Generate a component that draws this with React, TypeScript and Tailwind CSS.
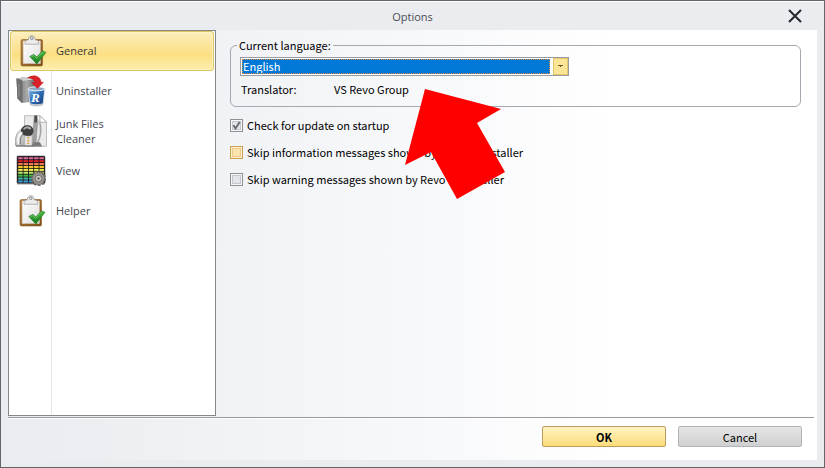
import { useState } from 'react';
import type { ReactNode } from 'react';

const uiFont = "font-['Noto_Sans_CJK_JP','Liberation_Sans',sans-serif]";

function ClipboardIcon() {
  return (
    <svg width="30" height="32" viewBox="0 0 30 32" aria-hidden="true">
      <defs>
        <linearGradient id="board" x1="0" y1="0" x2="1" y2="1">
          <stop offset="0" stopColor="#b98746" />
          <stop offset="1" stopColor="#7d4c17" />
        </linearGradient>
        <linearGradient id="sheet" x1="0" y1="0" x2="1" y2="1">
          <stop offset="0" stopColor="#ffffff" />
          <stop offset="1" stopColor="#dedede" />
        </linearGradient>
        <linearGradient id="tick" x1="0" y1="0" x2="0" y2="1">
          <stop offset="0" stopColor="#4fb944" />
          <stop offset="1" stopColor="#147a1b" />
        </linearGradient>
      </defs>
      <rect x="4" y="4.500" width="21.500" height="26.500" rx="1.500" fill="url(#board)" stroke="#8a5a22" strokeWidth=".6" />
      <path d="M6.200 6h17.200v22.500H6.200z" fill="url(#sheet)" stroke="#d9d2c4" strokeWidth=".5" />
      <path d="M8 9.200V6.800c0-1 1-1.500 3.200-1.900L12 2.200C12.800.2 16.800.2 17.600 2.200l.8 2.700c2.200.4 3.200.9 3.200 1.900v2.400z" fill="#ececec" stroke="#9a9a9a" strokeWidth=".7" />
      <circle cx="14.800" cy="3.200" r="1.300" fill="#fff" stroke="#666" strokeWidth=".8" />
      <path d="M12.800 21.500l4.200-2.200 2.600 2.800 6-6.300L29 17.500 19.800 29z" fill="url(#tick)" stroke="#1d7a22" strokeWidth=".6" />
      <path d="M14.400 21.700l2.400-1.200 2.700 3 6.200-6.500" fill="none" stroke="#86d97a" strokeWidth=".6" />
    </svg>
  );
}

function UninstallerIcon() {
  return (
    <svg width="30" height="32" viewBox="0 0 30 32" aria-hidden="true">
      <defs>
        <linearGradient id="box" x1="0" y1="0" x2="1" y2="0">
          <stop offset="0" stopColor="#5b5b5b" />
          <stop offset=".5" stopColor="#a9a9a9" />
          <stop offset="1" stopColor="#626262" />
        </linearGradient>
        <linearGradient id="bin" x1="0" y1="0" x2="1" y2="1">
          <stop offset="0" stopColor="#92bfe9" />
          <stop offset=".45" stopColor="#2e6fba" />
          <stop offset="1" stopColor="#103873" />
        </linearGradient>
      </defs>
      <path d="M.5 3.500l6-1 14 .7v23L5.500 28 1.500 23.500z" fill="url(#box)" />
      <path d="M.5 3.500l6-1 14 .7-14 2z" fill="#c6c6c6" />
      <path d="M.5 3.500l6 1.700V27.500l-5-4z" fill="#6f6f6f" />
      <path d="M6 5.300l14-1.700" stroke="#ddd" strokeWidth="1" />
      <path d="M3 9v13M7.500 6v21" stroke="#9a9a9a" strokeWidth=".8" />
      <path d="M12 14h16.700l-1.600 15.300c-2.200 2.200-10.800 2.200-13 0z" fill="url(#bin)" stroke="#d8dde5" strokeWidth=".8" />
      <path d="M13.800 28c3.600 1.600 9.600 1.600 13.300 0l-.3 2c-2.500 1.700-10.200 1.700-12.700 0z" fill="#c2c6cc" />
      <ellipse cx="20.400" cy="13.800" rx="8.300" ry="2" fill="#8ea8c5" stroke="#eef2f6" strokeWidth="1" />
      <path d="M11.500 3C16.500-.8 24.500.3 25 7.200h2.500L21.500 13.500 15.500 7.600h3.400C18.500 4.500 15.500 3 11.500 3z" fill="#dc2028" stroke="#a81318" strokeWidth=".4" />
      <text x="15" y="27" fontSize="13" fontWeight="700" fontStyle="italic" fill="#fff" fontFamily="Liberation Serif, serif">R</text>
    </svg>
  );
}

function JunkIcon() {
  return (
    <svg width="32" height="32" viewBox="0 0 32 32" aria-hidden="true">
      <defs>
        <linearGradient id="vac" x1="0" y1="0" x2="1" y2="1">
          <stop offset="0" stopColor="#f4f4f4" />
          <stop offset="1" stopColor="#8e8e8e" />
        </linearGradient>
      </defs>
      <path d="M9.500.7H25l6.500 6.500v24h-22z" fill="#ebebeb" stroke="#b0b0b0" strokeWidth=".8" />
      <path d="M25 .7v6.500h6.500z" fill="#fff" stroke="#a5a5a5" strokeWidth=".8" />
      <path d="M19.200 1l2.800-.3.500 8-1.500 19-3.500.5.800-14z" fill="#a2a2a2" stroke="#7c7c7c" strokeWidth=".5" />
      <path d="M19.500.8l2.500-.2.300 6.500-2.800 1z" fill="#4b4b4b" />
      <path d="M23.500 5c3.500 8 2.500 17-1.500 23" fill="none" stroke="#cfcfcf" strokeWidth="2.400" />
      <path d="M24.800 7c2 8 .7 16-2.800 21.500" fill="none" stroke="#8f8f8f" strokeWidth=".8" />
      <path d="M.6 30.500C-.3 23 1.500 17.500 6 14.500c6-3 13 0 13 6v10.500H1z" fill="url(#vac)" stroke="#8d8d8d" strokeWidth=".7" />
      <path d="M6 16c0-7 12-8 12.500 0-1 5-4 6-7 5.500S6.500 19 6 16z" fill="#3f3f3f" />
      <path d="M8 14c2-3.500 6.500-3.800 8.500-.8l-1.800 1.500c-1.700-1.600-4.200-1.400-5.200.3z" fill="#a9a9a9" />
      <path d="M9.500 20.500c2 .8 5.500.8 7.500 0v10.200H9.500z" fill="#e4e4e4" stroke="#a2a2a2" strokeWidth=".5" />
      <path d="M12.300 22h2v1.500h-2zM12.300 24.700h2v1.500h-2zM12.300 27.400h2v1.500h-2z" fill="#dca54c" />
      <path d="M3.300 29.500c-1-7 .5-10.500 4.200-12" fill="none" stroke="#fff" strokeWidth="1.600" />
      <path d="M5.500 29c-.6-5 .3-8 2.500-9.500" fill="none" stroke="#7c7c7c" strokeWidth=".9" />
      <path d="M17 30l2.500-2.700H25l1.500 3.500H17z" fill="#777" />
      <path d="M1 31h26" stroke="#6f6f6f" strokeWidth="1" />
    </svg>
  );
}

const swatches = ['#d76a9b', '#d5202a', '#ec7b58', '#f5c62e', '#f4ee55', '#b9e36b', '#44bd46', '#45b5a4', '#3aa0d8'];

function ViewIcon() {
  return (
    <svg width="30" height="32" viewBox="0 0 30 32" aria-hidden="true">
      <rect x="1" y="1" width="28" height="27.500" rx="1" fill="#151111" stroke="#5e5558" strokeWidth=".6" />
      {swatches.map((color, row) =>
        [0, 1, 2, 3, 4].map((col) => (
          <rect key={`${row}-${col}`} x={2.2 + col * 5.3} y={2.2 + row * 2.9} width="4.500" height="2.100" fill={color} />
        )),
      )}
      <path d="M1 29.500h28" stroke="#cfcfcf" strokeWidth="1" />
      <circle cx="22.500" cy="23.500" r="6.600" fill="none" stroke="#6d6865" strokeWidth="2" strokeDasharray="2.600 1.550" />
      <circle cx="22.500" cy="23.500" r="6.200" fill="#96918c" stroke="#6d6865" strokeWidth=".6" />
      <circle cx="22.500" cy="23.500" r="3.200" fill="#d7d4d0" stroke="#5b5754" strokeWidth=".8" />
      <circle cx="22.500" cy="23.500" r="1.200" fill="#5a5653" />
    </svg>
  );
}

interface Section {
  id: string;
  label: ReactNode;
  icon: ReactNode;
}

const sections: Section[] = [
  { id: 'general', label: 'General', icon: <ClipboardIcon /> },
  { id: 'uninstaller', label: 'Uninstaller', icon: <UninstallerIcon /> },
  { id: 'junk', label: <>Junk Files<br />Cleaner</>, icon: <JunkIcon /> },
  { id: 'view', label: 'View', icon: <ViewIcon /> },
  { id: 'helper', label: 'Helper', icon: <ClipboardIcon /> },
];

function Sidebar() {
  const [active, setActive] = useState('general');
  return (
    <nav className="flex w-[208px] shrink-0 flex-col border border-[#85878b] bg-white font-['Open_Sans','Noto_Sans',sans-serif] text-[11px] leading-[15px] text-[#44464e]">
      {sections.map((s) => (
        <button
          key={s.id}
          type="button"
          onClick={() => setActive(s.id)}
          className={
            s.id === active
              ? 'mx-px flex h-10 items-center rounded-[3px] border border-[#dcc561] bg-linear-to-b from-[#fdeebb] via-[#fbdf83] via-60% to-[#fdeeae] text-left text-[#3c3a32] shadow-[inset_0_0_0_1px_#fff3c4]'
              : 'mx-px flex h-10 items-center border border-transparent text-left'
          }
        >
          <span className={s.id === active ? 'flex h-10 w-[41px] shrink-0 items-center justify-center' : 'flex h-10 w-[41px] shrink-0 items-center justify-center border-r border-[#e2e3e6]'}>
            {s.icon}
          </span>
          <span className="pb-px pl-1">{s.label}</span>
        </button>
      ))}
      <div className="mb-px ml-[2px] w-[41px] flex-1 border-r border-[#e2e3e6]" />
    </nav>
  );
}

function CheckOption({ label, initial = false, hot = false }: { label: string; initial?: boolean; hot?: boolean }) {
  const [checked, setChecked] = useState(initial);
  return (
    <label className="flex h-[27px] items-center gap-1">
      <span className="grid size-[13px] shrink-0">
        <input
          type="checkbox"
          checked={checked}
          onChange={(e) => setChecked(e.target.checked)}
          className={
            hot
              ? 'col-start-1 row-start-1 size-[13px] appearance-none border border-[#cfa04c] bg-[#fbe3b0] shadow-[inset_0_0_0_1px_#fdf0cf,inset_0_0_0_2px_#efc88a]'
              : 'col-start-1 row-start-1 size-[13px] appearance-none border border-[#8e9096] bg-[#e3e5e9] shadow-[inset_0_0_0_1px_#f6f7f8,inset_0_0_0_2px_#c3c6cb]'
          }
        />
        {checked && (
          <svg viewBox="0 0 13 13" className="pointer-events-none col-start-1 row-start-1 size-[13px]" aria-hidden="true">
            <path d="M3.500 6.200l2 3.300 4.200-6.500" fill="none" stroke="#66686f" strokeWidth="1.900" />
          </svg>
        )}
      </span>
      {label}
    </label>
  );
}

function PointerArrow() {
  return (
    <svg width="101" height="111" viewBox="0 0 101 111" className="pointer-events-none absolute top-[87px] left-[403px]" aria-hidden="true">
      <path d="M21 1L97 21 73 35 101 84 53 111 27 64 1 77z" fill="#f00" />
    </svg>
  );
}

export default function App() {
  return (
    <div className={`relative flex h-screen flex-col border border-[#63656c] bg-[#ebecf0] text-[11px] text-black ${uiFont}`}>
      <header className="flex h-[29px] shrink-0 items-center border-t border-white pr-[22px] pl-[36px] font-['Open_Sans','Noto_Sans',sans-serif] text-[#4a4c54]">
        <h1 className="flex-1 pt-[2px] text-center">Options</h1>
        <button type="button" aria-label="Close" className="flex size-[14px] items-center">
          <svg width="14" height="14" viewBox="0 0 14 14" aria-hidden="true">
            <path d="M1 1l12 12M13 1L1 13" stroke="#26272e" strokeWidth="2" />
          </svg>
        </button>
      </header>

      <div className="mx-[7px] mb-[7px] flex flex-1 flex-col bg-linear-to-r from-[#e9ecf0] via-[#f7f8fa] via-50% to-white to-75%">
        <div className="flex flex-1">
          <Sidebar />
          <main className="flex-1 pt-[6px] pr-4 pl-[14px]">
            <fieldset className="h-[71px] rounded-md border border-[#a6a9af] px-[9px]">
              <legend className="-ml-[3px] px-[2px] leading-[18px]">Current language:</legend>
              <div className="mt-[3px] flex h-[19px] w-[329px] max-w-full border border-[#999ba0] bg-white p-px">
                <select
                  aria-label="Current language"
                  className="h-[15px] min-w-0 flex-1 appearance-none border border-dotted border-[#e08a35] bg-[#0078d7] leading-[13px] text-white outline-none"
                >
                  <option>English</option>
                </select>
                <span className="-my-px -mr-px ml-[3px] flex w-[15px] items-center justify-center border border-[#e3c66c] bg-[#fbe596]">
                  <svg width="5" height="3" viewBox="0 0 5 3" aria-hidden="true">
                    <path d="M0 0h5v1H3v1H2V1H0z" fill="#6b5828" />
                  </svg>
                </span>
              </div>
              <dl className="mt-1 flex leading-[18px]">
                <dt className="w-[94px] pl-px">Translator:</dt>
                <dd>VS Revo Group</dd>
              </dl>
            </fieldset>
            <div className="mt-[5px]">
              <CheckOption label="Check for update on startup" initial />
              <CheckOption label="Skip information messages shown by Revo Uninstaller" hot />
              <CheckOption label="Skip warning messages shown by Revo Uninstaller" />
            </div>
          </main>
        </div>
        <footer className="mt-px mr-[3px] flex h-[43px] shrink-0 justify-end gap-3 border-t border-[#98999d] pt-2 pr-3 shadow-[inset_0_1px_0_#fff]">
          <button type="button" className="h-[21px] w-[124px] rounded-[2px] border border-[#bd9c5c] bg-linear-to-b from-[#fff3c2] to-[#fddc78] leading-[18px] font-bold">
            OK
          </button>
          <button type="button" className="h-[21px] w-[124px] rounded-[2px] border border-[#b2b3b6] bg-linear-to-b from-[#e6e6e6] to-[#d0d0d0] leading-[18px]">
            Cancel
          </button>
        </footer>
      </div>
      <PointerArrow />
    </div>
  );
}
